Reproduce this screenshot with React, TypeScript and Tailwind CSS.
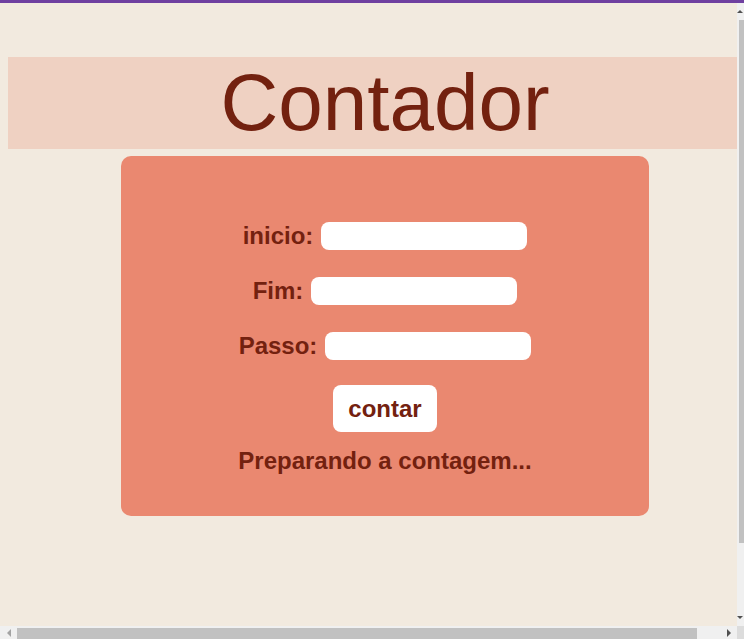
import React from "react";

function Row({ label, className }: { label: string; className?: string }) {
  return (
    <div className={"flex items-center justify-center gap-2 h-[28px] " + (className ?? "")}>
      <span className="text-[24px] leading-[28px] font-bold text-[#73210f]">{label}</span>
      <input className="w-[206px] h-[28px] rounded-[8px] bg-white border-0 outline-none" />
    </div>
  );
}

export default function App() {
  return (
    <div className="w-[744px] h-[639px] flex flex-col overflow-hidden bg-[#f2eadf] font-['Liberation_Sans',Arial,sans-serif]">
      <div className="h-[3px] shrink-0 bg-[#6f40a0]" />
      <div className="flex flex-1 min-h-0">
        <div className="flex-1 overflow-hidden">
          <div className="w-[770px] px-2 pt-[54px]">
            <h1 className="bg-[#efd1c2] text-center text-[80px] leading-[92px] text-[#73210f] font-normal">
              Contador
            </h1>
            <div className="mt-[7px] mx-auto w-[528px] h-[360px] rounded-[10px] bg-[#ea8870] pt-[66px] flex flex-col items-center">
              <Row label="inicio:" className="mb-[27px]" />
              <Row label="Fim:" className="mb-[27px]" />
              <Row label="Passo:" />
              <button className="mt-[25px] w-[104px] h-[47px] rounded-[8px] bg-white text-[24px] font-bold text-[#73210f]">
                contar
              </button>
              <p className="mt-[15px] text-[24px] leading-[28px] font-bold text-[#73210f]">
                Preparando a contagem...
              </p>
            </div>
          </div>
        </div>
        <div className="w-[7px] shrink-0 bg-[#f0f0f0] flex flex-col">
          <div className="h-[17px] flex items-center justify-end pr-[1px]">
            <div className="w-0 h-0 border-l-[3px] border-r-[3px] border-b-[3px] border-l-transparent border-r-transparent border-b-[#505050]" />
          </div>
          <div className="h-[523px] ml-[2px] bg-[#c1c1c1]" />
          <div className="flex-1" />
          <div className="h-[17px] flex items-center justify-end pr-[1px]">
            <div className="w-0 h-0 border-l-[3px] border-r-[3px] border-t-[3px] border-l-transparent border-r-transparent border-t-[#505050]" />
          </div>
        </div>
      </div>
      <div className="h-[13px] shrink-0 flex bg-[#f0f0f0]">
        <div className="w-[17px] flex items-center justify-center">
          <div className="w-0 h-0 border-t-[4px] border-b-[4px] border-r-[4px] border-t-transparent border-b-transparent border-r-[#a3a3a3]" />
        </div>
        <div className="w-[680px] mt-[2px] bg-[#c1c1c1]" />
        <div className="flex-1 flex items-center justify-end pr-[6px]">
          <div className="w-0 h-0 border-t-[4px] border-b-[4px] border-l-[4px] border-t-transparent border-b-transparent border-l-[#505050]" />
        </div>
        <div className="w-[7px] bg-[#dcdcdc]" />
      </div>
    </div>
  );
}
